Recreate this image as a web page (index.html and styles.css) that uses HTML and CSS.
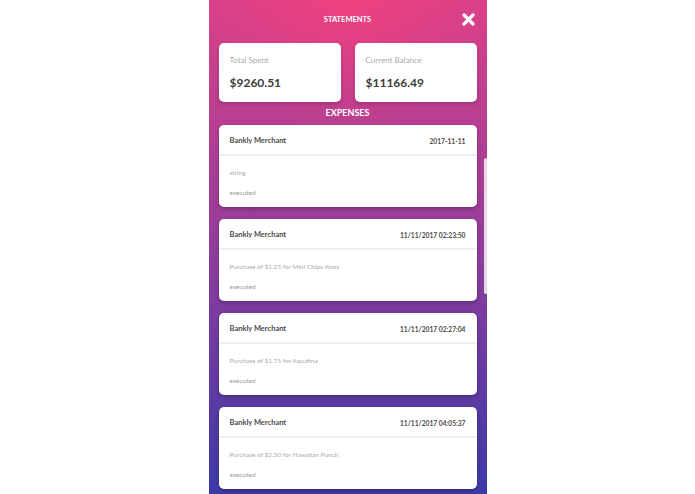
FILE: index.html
```html
<!DOCTYPE html>
<html>
<head>
<meta charset="utf-8">
<link rel="stylesheet" href="styles.css">
</head>
<body>
<div class="panel">
  <div class="topbar">
    <span></span>
    <div class="title">STATEMENTS</div>
    <div class="close">
      <svg width="13" height="13" viewBox="0 0 13 13"><path d="M2 2 L11 11 M11 2 L2 11" stroke="#fff" stroke-width="3.2" stroke-linecap="round"/></svg>
    </div>
  </div>
  <div class="summary">
    <div class="sum-card">
      <div class="sum-label">Total Spent</div>
      <div class="sum-value">$9260.51</div>
    </div>
    <div class="sum-card">
      <div class="sum-label">Current Balance</div>
      <div class="sum-value">$11166.49</div>
    </div>
  </div>
  <div class="section">EXPENSES</div>
  <div class="list">
    <div class="exp">
      <div class="exp-head"><span class="merchant">Bankly Merchant</span><span class="date">2017-11-11</span></div>
      <div class="exp-body"><div class="desc">string</div><div class="status">executed</div></div>
    </div>
    <div class="exp">
      <div class="exp-head"><span class="merchant">Bankly Merchant</span><span class="date">11/11/2017 02:23:50</span></div>
      <div class="exp-body"><div class="desc">Purchase of $1.25 for Mini Chips Ahoy</div><div class="status">executed</div></div>
    </div>
    <div class="exp">
      <div class="exp-head"><span class="merchant">Bankly Merchant</span><span class="date">11/11/2017 02:27:04</span></div>
      <div class="exp-body"><div class="desc">Purchase of $1.75 for Aquafina</div><div class="status">executed</div></div>
    </div>
    <div class="exp">
      <div class="exp-head"><span class="merchant">Bankly Merchant</span><span class="date">11/11/2017 04:05:37</span></div>
      <div class="exp-body"><div class="desc">Purchase of $2.50 for Hawaiian Punch</div><div class="status">executed</div></div>
    </div>
  </div>
  <div class="scrollbar"></div>
</div>
</body>
</html>
```
FILE: styles.css
```css
html, body {
  margin: 0;
  padding: 0;
  background: #fff;
  font-family: Lato, "Open Sans", sans-serif;
}
.panel {
  position: relative;
  width: 278px;
  height: 494px;
  margin: 0 auto;
  padding: 0 10px;
  box-sizing: border-box;
  overflow: hidden;
  background:
    radial-gradient(ellipse 170px 130px at 50% 0%, rgba(255, 64, 120, 0.6), rgba(255, 64, 120, 0) 100%),
    linear-gradient(to bottom, #d5418a 0%, #b73f92 25%, #923d9b 50%, #653ba3 75%, #3d3aa8 100%);
}
.topbar {
  height: 38px;
  display: grid;
  grid-template-columns: 1fr auto 1fr;
  align-items: center;
}
.title {
  color: #fff;
  font-size: 7.5px;
  font-weight: 700;
}
.close {
  justify-self: end;
  margin-right: 2px;
  display: flex;
}
.summary {
  margin-top: 5px;
  display: grid;
  grid-template-columns: 1fr 1fr;
  gap: 14px;
}
.sum-card {
  background: #fff;
  border-radius: 5px;
  height: 59px;
  padding: 12px 11px 0;
  box-sizing: border-box;
  box-shadow: 0 2px 4px rgba(0, 0, 0, 0.2);
}
.sum-label {
  font-size: 8px;
  color: #aaa;
  line-height: 10px;
}
.sum-value {
  margin-top: 10px;
  font-size: 12px;
  font-weight: 700;
  color: #3c3c3c;
  line-height: 16px;
}
.section {
  height: 23px;
  line-height: 22px;
  text-align: center;
  color: #fff;
  font-size: 9px;
  font-weight: 700;
}
.list {
  display: flex;
  flex-direction: column;
  gap: 12px;
}
.exp {
  background: #fff;
  border-radius: 5px;
  height: 82px;
  box-shadow: 0 2px 4px rgba(0, 0, 0, 0.25);
  overflow: hidden;
}
.exp-head {
  height: 31px;
  display: flex;
  justify-content: space-between;
  align-items: center;
  padding: 2px 11px 0;
  box-sizing: border-box;
  border-bottom: 2px solid #eeeeee;
}
.merchant {
  font-size: 7.5px;
  font-weight: 700;
  color: #4a4a4a;
}
.date {
  font-size: 6.7px;
  font-weight: 700;
  color: #4a4a4a;
}
.exp-body {
  padding: 12px 11px 0;
}
.desc, .status {
  font-size: 6.5px;
  color: #aaa;
  line-height: 10px;
}
.status {
  margin-top: 9.5px;
  color: #9a9a9a;
}
.scrollbar {
  position: absolute;
  right: 0;
  top: 158px;
  width: 3px;
  height: 136px;
  border-radius: 2px;
  background: rgba(255, 255, 255, 0.8);
}
```
